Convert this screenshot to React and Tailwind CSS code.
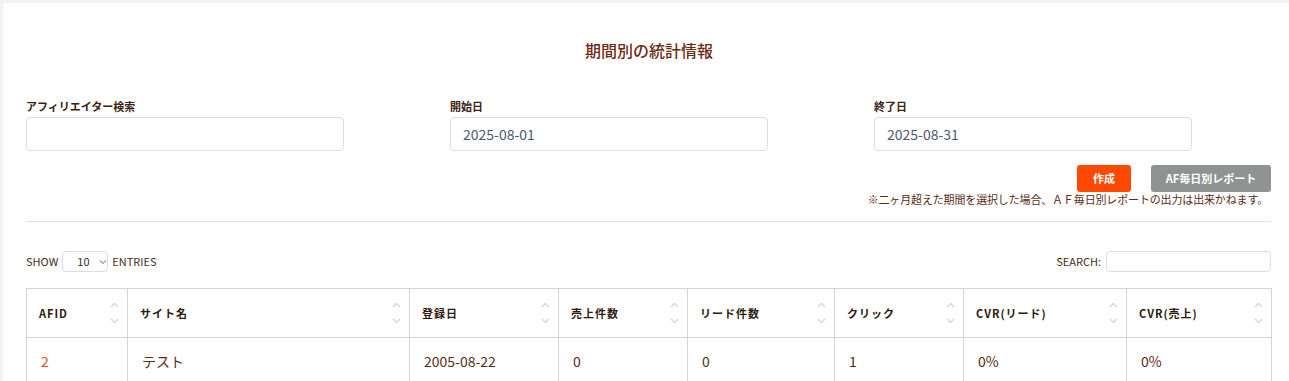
import React from "react";

const columns = [
  { label: "AFID", width: "w-[101px]" },
  { label: "サイト名", width: "w-[282px]" },
  { label: "登録日", width: "w-[149px]" },
  { label: "売上件数", width: "w-[129px]" },
  { label: "リード件数", width: "w-[147px]" },
  { label: "クリック", width: "w-[129px]" },
  { label: "CVR(リード)", width: "w-[163px]" },
  { label: "CVR(売上)", width: "w-[145px]" },
];

const rows = [
  { afid: "2", site: "テスト", date: "2005-08-22", sales: "0", leads: "0", clicks: "1", cvrLead: "0%", cvrSale: "0%" },
];

const SortIcon = () => (
  <svg width="9" height="22" viewBox="0 0 9 22" className="shrink-0">
    <path d="M1 5 L4.5 1.5 L8 5" fill="none" stroke="#d4d4d4" strokeWidth="1.3" />
    <path d="M1 17 L4.5 20.5 L8 17" fill="none" stroke="#d4d4d4" strokeWidth="1.3" />
  </svg>
);

const Field = ({ label, value }) => (
  <div className="w-[424px] shrink-0">
    <label className="block text-[11px] font-bold text-[#3b2313] leading-[14px] mb-[4px]">{label}</label>
    <div className="w-[318px] h-[34px] border border-[#dcdde3] rounded-[4px] px-[12px] flex items-center text-[14px] text-[#4b5a70]">
      {value}
    </div>
  </div>
);

const App = () => {
  return (
    <div
      className="min-h-[381px] bg-[#f2f3f3] pl-[3px] pt-[3px]"
      style={{ fontFamily: '"Noto Sans CJK JP", "Noto Sans", sans-serif' }}
    >
      <div className="bg-white rounded-tl-[3px] pl-[23px] pr-[18px] min-h-[378px]">
        {/* Title */}
        <h1 className="pt-[36px] text-center text-[16px] font-medium text-[#6b2b12] leading-[22px] pl-[1px]">
          期間別の統計情報
        </h1>

        {/* Search form */}
        <div className="flex mt-[38px]">
          <Field label="アフィリエイター検索" value="" />
          <Field label="開始日" value="2025-08-01" />
          <Field label="終了日" value="2025-08-31" />
        </div>

        <div className="flex justify-end gap-[20px] mt-[14px]">
          <button className="w-[54px] h-[27px] rounded-[3px] bg-[#ff4800] text-white text-[11px] font-bold">
            作成
          </button>
          <button className="w-[120px] h-[27px] rounded-[3px] bg-[#8f9492] text-white text-[11px] font-bold">
            AF毎日別レポート
          </button>
        </div>
        <p className="text-right text-[11px] tracking-[-0.15px] text-[#5a2b18] leading-[15px] pr-[3px]">
          ※二ヶ月超えた期間を選択した場合、ＡＦ毎日別レポートの出力は出来かねます。
        </p>

        <hr className="border-[#e2e3e5] mt-[14px]" />

        {/* Table controls */}
        <div className="flex justify-between items-center mt-[29px] text-[11px] text-[#4a2a1a]">
          <div className="flex items-center gap-[4px]">
            <span>SHOW</span>
            <div className="w-[46px] h-[21px] border border-[#dcdde3] rounded-[4px] flex items-center pl-[14px] gap-[9px]">
              <span className="text-[11px] text-[#3a2a20]">10</span>
              <svg width="8" height="6" viewBox="0 0 8 6">
                <path d="M1 1.5 L4 4.5 L7 1.5" fill="none" stroke="#9aa0a6" strokeWidth="1.2" />
              </svg>
            </div>
            <span>ENTRIES</span>
          </div>
          <div className="flex items-center gap-[5px]">
            <span>SEARCH:</span>
            <div className="w-[165px] h-[21px] border border-[#dcdde3] rounded-[4px]" />
          </div>
        </div>

        {/* Table */}
        <table className="table-fixed w-[1245px] border-collapse mt-[16px]">
          <thead>
            <tr>
              {columns.map((c) => (
                <th
                  key={c.label}
                  className={`${c.width} h-[49px] border border-[#d4d4d6] p-0 font-bold`}
                >
                  <div className="flex items-center justify-between pl-[12px] pr-[8px]">
                    <span className="text-[11px] tracking-[1px] text-[#2e1a0e]">{c.label}</span>
                    <SortIcon />
                  </div>
                </th>
              ))}
            </tr>
          </thead>
          <tbody>
            {rows.map((r) => (
              <tr key={r.afid} className="text-[14px] text-[#5a2c18]">
                <td className="h-[48px] border border-[#d4d4d6] pl-[14px] text-[#ec4a1c]">{r.afid}</td>
                <td className="border border-[#d4d4d6] pl-[14px]">{r.site}</td>
                <td className="border border-[#d4d4d6] pl-[14px]">{r.date}</td>
                <td className="border border-[#d4d4d6] pl-[14px]">{r.sales}</td>
                <td className="border border-[#d4d4d6] pl-[14px]">{r.leads}</td>
                <td className="border border-[#d4d4d6] pl-[14px]">{r.clicks}</td>
                <td className="border border-[#d4d4d6] pl-[14px]">{r.cvrLead}</td>
                <td className="border border-[#d4d4d6] pl-[14px]">{r.cvrSale}</td>
              </tr>
            ))}
          </tbody>
        </table>
      </div>
    </div>
  );
};

export default App;
